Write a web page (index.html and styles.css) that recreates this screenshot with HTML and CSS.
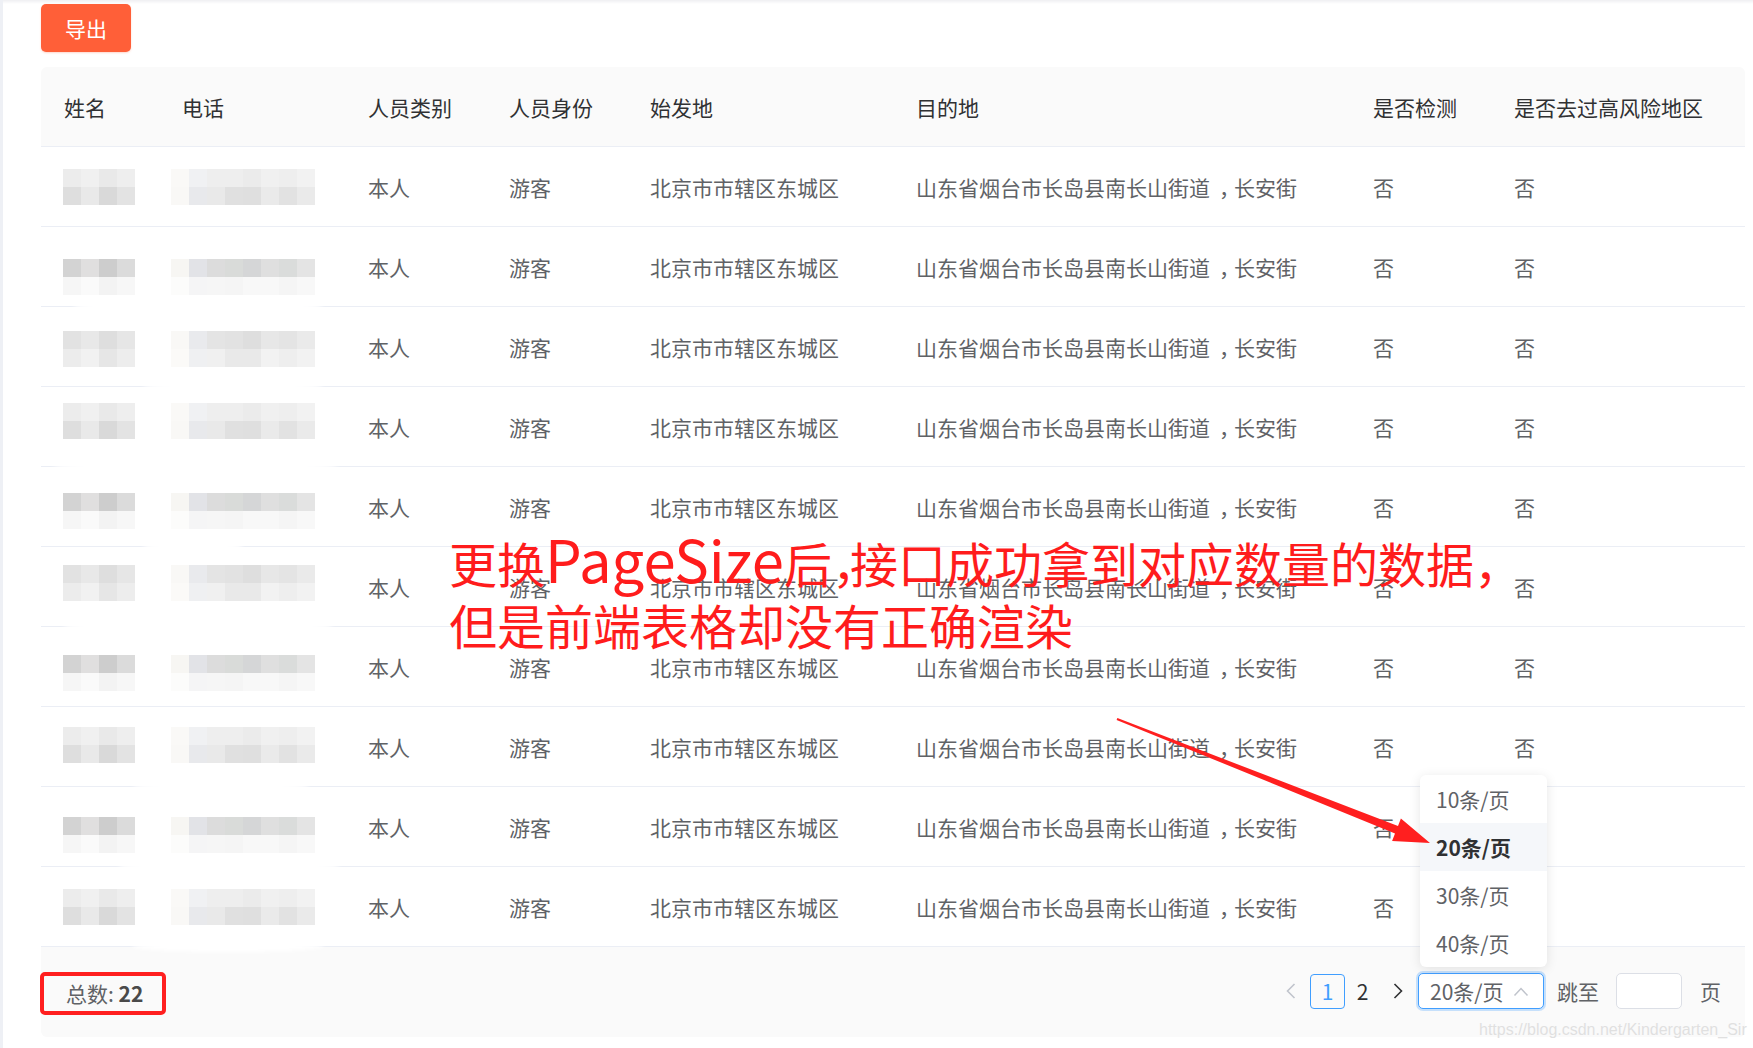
FILE: index.html
```html
<!DOCTYPE html>
<html lang="zh-CN">
<head>
<meta charset="utf-8">
<title>人员列表</title>
<link rel="stylesheet" href="styles.css">
</head>
<body>
<div class="page">
  <div class="toolbar"><button class="btn-export">导出</button></div>

  <div class="table">
    <div class="thead cols">
      <div class="th">姓名</div>
      <div class="th">电话</div>
      <div class="th">人员类别</div>
      <div class="th">人员身份</div>
      <div class="th">始发地</div>
      <div class="th">目的地</div>
      <div class="th">是否检测</div>
      <div class="th">是否去过高风险地区</div>
    </div>

    <div class="tr cols">
      <div class="td m"><div class="mz mz-name nB o22"></div></div>
      <div class="td m"><div class="mz mz-phone pB o22"></div></div>
      <div class="td">本人</div><div class="td">游客</div><div class="td">北京市市辖区东城区</div>
      <div class="td">山东省烟台市长岛县南长山街道<span class="cm">，</span>长安街</div><div class="td">否</div><div class="td">否</div>
    </div>
    <div class="tr cols">
      <div class="td m"><div class="mz mz-name nA o32"></div></div>
      <div class="td m"><div class="mz mz-phone pA o32"></div></div>
      <div class="td">本人</div><div class="td">游客</div><div class="td">北京市市辖区东城区</div>
      <div class="td">山东省烟台市长岛县南长山街道<span class="cm">，</span>长安街</div><div class="td">否</div><div class="td">否</div>
    </div>
    <div class="tr cols">
      <div class="td m"><div class="mz mz-name nC o24"></div></div>
      <div class="td m"><div class="mz mz-phone pC o24"></div></div>
      <div class="td">本人</div><div class="td">游客</div><div class="td">北京市市辖区东城区</div>
      <div class="td">山东省烟台市长岛县南长山街道<span class="cm">，</span>长安街</div><div class="td">否</div><div class="td">否</div>
    </div>
    <div class="tr cols">
      <div class="td m"><div class="mz mz-name nB o16"></div></div>
      <div class="td m"><div class="mz mz-phone pB o16"></div></div>
      <div class="td">本人</div><div class="td">游客</div><div class="td">北京市市辖区东城区</div>
      <div class="td">山东省烟台市长岛县南长山街道<span class="cm">，</span>长安街</div><div class="td">否</div><div class="td">否</div>
    </div>
    <div class="tr cols">
      <div class="td m"><div class="mz mz-name nA o26"></div></div>
      <div class="td m"><div class="mz mz-phone pA o26"></div></div>
      <div class="td">本人</div><div class="td">游客</div><div class="td">北京市市辖区东城区</div>
      <div class="td">山东省烟台市长岛县南长山街道<span class="cm">，</span>长安街</div><div class="td">否</div><div class="td">否</div>
    </div>
    <div class="tr cols">
      <div class="td m"><div class="mz mz-name nC o18"></div></div>
      <div class="td m"><div class="mz mz-phone pC o18"></div></div>
      <div class="td">本人</div><div class="td">游客</div><div class="td">北京市市辖区东城区</div>
      <div class="td">山东省烟台市长岛县南长山街道<span class="cm">，</span>长安街</div><div class="td">否</div><div class="td">否</div>
    </div>
    <div class="tr cols">
      <div class="td m"><div class="mz mz-name nA o28"></div></div>
      <div class="td m"><div class="mz mz-phone pA o28"></div></div>
      <div class="td">本人</div><div class="td">游客</div><div class="td">北京市市辖区东城区</div>
      <div class="td">山东省烟台市长岛县南长山街道<span class="cm">，</span>长安街</div><div class="td">否</div><div class="td">否</div>
    </div>
    <div class="tr cols">
      <div class="td m"><div class="mz mz-name nB o20"></div></div>
      <div class="td m"><div class="mz mz-phone pB o20"></div></div>
      <div class="td">本人</div><div class="td">游客</div><div class="td">北京市市辖区东城区</div>
      <div class="td">山东省烟台市长岛县南长山街道<span class="cm">，</span>长安街</div><div class="td">否</div><div class="td">否</div>
    </div>
    <div class="tr cols">
      <div class="td m"><div class="mz mz-name nA o30"></div></div>
      <div class="td m"><div class="mz mz-phone pA o30"></div></div>
      <div class="td">本人</div><div class="td">游客</div><div class="td">北京市市辖区东城区</div>
      <div class="td">山东省烟台市长岛县南长山街道<span class="cm">，</span>长安街</div><div class="td">否</div><div class="td">否</div>
    </div>
    <div class="tr cols">
      <div class="td m"><div class="mz mz-name nB o22"></div></div>
      <div class="td m"><div class="mz mz-phone pB o22"></div></div>
      <div class="td">本人</div><div class="td">游客</div><div class="td">北京市市辖区东城区</div>
      <div class="td">山东省烟台市长岛县南长山街道<span class="cm">，</span>长安街</div><div class="td">否</div><div class="td">否</div>
    </div>

    <div class="tfoot">
      <div class="total">总数: <b>22</b></div>
      <div class="pager">
        <span class="pg-btn pg-prev"><svg width="12" height="16" viewBox="0 0 12 16"><path d="M9.5 1 L2.5 8 L9.5 15" fill="none" stroke="#c0c4cc" stroke-width="1.6"/></svg></span>
        <span class="pg-btn pg-num active">1</span>
        <span class="pg-btn pg-num">2</span>
        <span class="pg-btn pg-next"><svg width="12" height="16" viewBox="0 0 12 16"><path d="M2.5 1 L9.5 8 L2.5 15" fill="none" stroke="#303133" stroke-width="1.6"/></svg></span>
        <span class="pg-select"><span class="pg-select-text">20条/页</span><svg class="pg-caret" width="16" height="11" viewBox="0 0 16 11"><path d="M1.5 9.5 L8 2.5 L14.5 9.5" fill="none" stroke="#c0c4cc" stroke-width="1.5"/></svg></span>
        <span class="pg-jump">跳至</span>
        <span class="pg-input"></span>
        <span class="pg-page">页</span>
      </div>
    </div>
  </div>

  <div class="smudge sm1"></div>
  <div class="smudge sm2"></div>
  <div class="smudge sm3"></div>
  <div class="smudge sm4"></div>
  <div class="smudge sm5"></div>
  <div class="smudge sm6"></div>
  <div class="smudge sm7"></div>
  <div class="smudge sm8"></div>

  <ul class="dropdown">
    <li>10条/页</li>
    <li class="selected">20条/页</li>
    <li>30条/页</li>
    <li>40条/页</li>
  </ul>

  <div class="annotation">更换<span class="latin">PageSize</span>后<span class="halt">，</span>接口成功拿到对应数量的数据，<br>但是前端表格却没有正确渲染</div>

  <svg class="arrow" width="1753" height="1048" viewBox="0 0 1753 1048">
    <polygon points="1114.4,718.1 1395,826 1397.9,818.5 1427,843 1389.1,840.9 1392,833.4 1113.6,719.9" fill="#ff1f1f"/>
  </svg>

  <div class="watermark">https://blog.csdn.net/Kindergarten_Sir</div>
</div>
</body>
</html>
```

FILE: styles.css
```css
html, body {
  margin: 0;
  padding: 0;
}
body {
  background: linear-gradient(#efeff2, #ffffff 4px);
  font-family: "Noto Sans CJK SC", "Microsoft YaHei", sans-serif;
  color: #606266;
}
.page {
  position: relative;
  width: 1753px;
  height: 1048px;
  box-sizing: border-box;
  border-left: 3px solid #eef0f5;
  padding: 4px 8px 0 38px;
  overflow: hidden;
}
.toolbar {
  height: 48px;
  margin-bottom: 15px;
}
.btn-export {
  width: 90px;
  height: 48px;
  border: none;
  border-radius: 5px;
  background: #ff5f38;
  color: #fff;
  font-family: "Noto Sans CJK SC", sans-serif;
  font-size: 21px;
  padding: 0;
  box-shadow: 0 1px 2px rgba(255, 95, 56, 0.25);
}
.table {
  width: 1704px;
}
.cols {
  display: grid;
  grid-template-columns: 118px 186px 141px 141px 266px 457px 141px 1fr;
  align-items: center;
  border-bottom: 1px solid #ebeef5;
}
.thead {
  height: 79px;
  background: #fafafa;
  border-radius: 6px 6px 0 0;
  color: #303133;
}
.th, .td {
  padding-left: 23px;
  font-size: 21px;
  white-space: nowrap;
}
.tr {
  height: 79px;
}
.td.m {
  align-self: start;
  padding-left: 0;
}
.cm {
  padding-left: 9px;
  margin-right: -6px;
}
.mz {
  height: 36px;
}
.mz-name {
  width: 72px;
  margin-left: 22px;
}
.mz-phone {
  width: 144px;
  margin-left: 12px;
}
.o16 { margin-top: 16px; }
.o18 { margin-top: 18px; }
.o20 { margin-top: 20px; }
.o22 { margin-top: 22px; }
.o24 { margin-top: 24px; }
.o26 { margin-top: 26px; }
.o28 { margin-top: 28px; }
.o30 { margin-top: 30px; }
.o32 { margin-top: 32px; }

.nA {
  background:
    linear-gradient(to right, #d3d3d3 0 18px, #e0dfdf 18px 36px, #cdcdcd 36px 54px, #dbdbdb 54px) top / 100% 50% no-repeat,
    linear-gradient(to right, #f6f6f6 0 18px, #fafafa 18px 36px, #f3f3f3 36px 54px, #f7f7f7 54px) bottom / 100% 50% no-repeat;
}
.nB {
  background:
    linear-gradient(to right, #ececec 0 18px, #f0f0f0 18px 36px, #e9e9e9 36px 54px, #eeeeee 54px) top / 100% 50% no-repeat,
    linear-gradient(to right, #dedede 0 18px, #e9e9e9 18px 36px, #d9d9d9 36px 54px, #e3e3e3 54px) bottom / 100% 50% no-repeat;
}
.nC {
  background:
    linear-gradient(to right, #e2e2e2 0 18px, #e8e8e8 18px 36px, #dedede 36px 54px, #e6e6e6 54px) top / 100% 50% no-repeat,
    linear-gradient(to right, #ececec 0 18px, #f1f1f1 18px 36px, #e6e6e6 36px 54px, #ededed 54px) bottom / 100% 50% no-repeat;
}
.pA {
  background:
    linear-gradient(to right, #f7f6f3 0 18px, #e2e3e7 18px 36px, #dcdcdc 36px 54px, #d9dbd9 54px 72px, #d5d6d7 72px 90px, #dfdfdf 90px 108px, #dadcdb 108px 126px, #e4e4e4 126px) top / 100% 50% no-repeat,
    linear-gradient(to right, #fcfcfb 0 18px, #f5f5f6 18px 36px, #f6f6f6 36px 54px, #f5f5f5 54px 72px, #f8f8f8 72px 90px, #f8f8f8 90px 108px, #f5f5f5 108px 126px, #f8f8f8 126px) bottom / 100% 50% no-repeat;
}
.pB {
  background:
    linear-gradient(to right, #faf9f7 0 18px, #f0f1f3 18px 36px, #eeeeee 36px 54px, #eeeeee 54px 72px, #ebebeb 72px 90px, #f0f0f0 90px 108px, #eeeeee 108px 126px, #f2f2f2 126px) top / 100% 50% no-repeat,
    linear-gradient(to right, #f9f8f6 0 18px, #e8e9ec 18px 36px, #e9e9e9 36px 54px, #e0e0e0 54px 72px, #dfdfdf 72px 90px, #eaeaea 90px 108px, #e2e2e2 108px 126px, #eaeaea 126px) bottom / 100% 50% no-repeat;
}
.pC {
  background:
    linear-gradient(to right, #f9f8f6 0 18px, #e9eaed 18px 36px, #e4e4e4 36px 54px, #e2e2e2 54px 72px, #dedede 72px 90px, #e7e7e7 90px 108px, #e4e4e4 108px 126px, #eaeaea 126px) top / 100% 50% no-repeat,
    linear-gradient(to right, #fbfaf8 0 18px, #eff0f2 18px 36px, #f0f0f0 36px 54px, #e9e9e9 54px 72px, #e9e9e9 72px 90px, #f2f2f2 90px 108px, #eeeeee 108px 126px, #f2f2f2 126px) bottom / 100% 50% no-repeat;
}

.tfoot {
  height: 90px;
  box-sizing: border-box;
  padding-top: 25px;
  background: #fafafa;
  border-radius: 0 0 6px 6px;
  display: flex;
  justify-content: space-between;
  align-items: flex-start;
}
.total {
  width: 126px;
  height: 43px;
  box-sizing: border-box;
  margin-left: -1px;
  border: 4px solid #ff1f1f;
  border-radius: 5px;
  padding-left: 22px;
  font-size: 21px;
  line-height: 35px;
  color: #606266;
  white-space: nowrap;
}
.total b {
  color: #4a4a4a;
  font-weight: 700;
}
.pager {
  display: flex;
  align-items: center;
  margin-top: 1px;
  padding-right: 24px;
  font-size: 21px;
  color: #303133;
}
.pg-btn {
  width: 35px;
  height: 35px;
  box-sizing: border-box;
  display: flex;
  align-items: center;
  justify-content: center;
}
.pg-prev {
  margin-right: 2px;
}
.pg-num.active {
  border: 1px solid #409eff;
  border-radius: 4px;
  color: #409eff;
}
.pg-select {
  margin-left: 3px;
  width: 126px;
  height: 36px;
  box-sizing: border-box;
  border: 1px solid #409eff;
  border-radius: 5px;
  box-shadow: 0 0 0 2px rgba(64, 158, 255, 0.28);
  background: #fff;
  display: flex;
  align-items: center;
  padding: 0 14px 0 11px;
  color: #606266;
}
.pg-caret {
  margin-left: auto;
}
.pg-jump {
  margin-left: 13px;
  color: #606266;
}
.pg-input {
  margin-left: 17px;
  width: 66px;
  height: 36px;
  box-sizing: border-box;
  border: 1px solid #dcdfe6;
  border-radius: 5px;
  background: #fff;
}
.pg-page {
  margin-left: 18px;
  color: #606266;
}

.smudge {
  position: absolute;
  background: #fff;
  border-radius: 50%;
  filter: blur(2px);
}
.sm1 { left: 70px;  top: 298px; width: 250px; height: 16px; }
.sm2 { left: 140px; top: 380px; width: 180px; height: 12px; }
.sm3 { left: 50px;  top: 457px; width: 285px; height: 16px; }
.sm4 { left: 140px; top: 540px; width: 100px; height: 12px; }
.sm5 { left: 60px;  top: 618px; width: 270px; height: 16px; }
.sm6 { left: 130px; top: 780px; width: 176px; height: 12px; }
.sm7 { left: 115px; top: 859px; width: 222px; height: 14px; }
.sm8 { left: 129px; top: 940px; width: 192px; height: 12px; }

.dropdown {
  position: absolute;
  left: 1417px;
  top: 775px;
  width: 127px;
  margin: 0;
  padding: 0;
  list-style: none;
  background: #fff;
  border-radius: 6px;
  box-shadow: 0 2px 12px rgba(0, 0, 0, 0.1);
  overflow: hidden;
  z-index: 4;
}
.dropdown li {
  height: 48px;
  line-height: 48px;
  padding-left: 16px;
  font-size: 21px;
  color: #606266;
}
.dropdown li.selected {
  background: #f5f7fa;
  color: #303133;
  font-weight: 700;
}

.annotation {
  position: absolute;
  left: 446px;
  top: 527px;
  font-size: 48px;
  line-height: 62px;
  color: #ff1c1c;
  white-space: nowrap;
  z-index: 6;
}
.annotation .latin {
  font-size: 58px;
  line-height: 62px;
}
.annotation .halt {
  font-feature-settings: "halt";
  letter-spacing: -6px;
}
.arrow {
  position: absolute;
  left: 0;
  top: 0;
  z-index: 7;
  pointer-events: none;
}
.watermark {
  position: absolute;
  left: 1476px;
  top: 1021px;
  font-family: "Liberation Sans", Arial, sans-serif;
  font-size: 16px;
  color: #e0e0e0;
  text-shadow: 0 0 1px #ffffff;
  white-space: nowrap;
  z-index: 3;
}
```
